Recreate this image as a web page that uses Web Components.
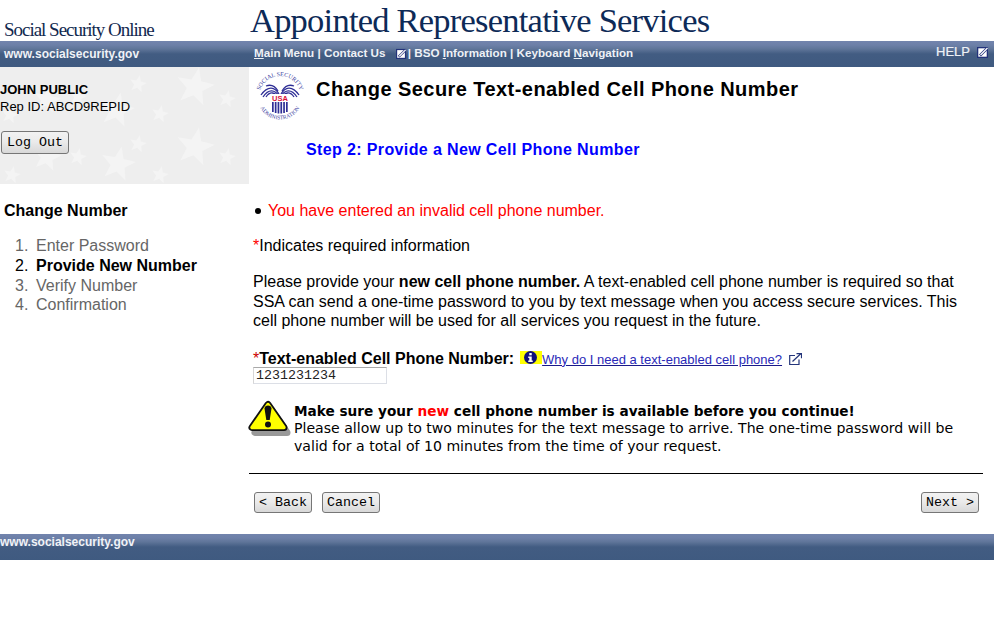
<!DOCTYPE html>
<html lang="en"><head><meta charset="utf-8"><title>Change Number</title>
<style>
html,body{margin:0;padding:0;background:#fff;font-family:"Liberation Sans",Arial,sans-serif;color:#000}
</style></head><body>
<ssa-page>
  <ssa-masthead></ssa-masthead>
  <ssa-bar>
    <span slot="left">www.socialsecurity.gov</span>
    <ssa-nav slot="right"></ssa-nav>
  </ssa-bar>
  <ssa-main>
    <ssa-sidebar slot="side"></ssa-sidebar>
    <ssa-content slot="main"></ssa-content>
  </ssa-main>
  <ssa-footer></ssa-footer>
</ssa-page>
<script>
function def(name, html){
  customElements.define(name, class extends HTMLElement{
    constructor(){super();this.attachShadow({mode:'open'}).innerHTML=html;}
  });
}
const ext=s=>`<svg width="${s}" height="${s}" viewBox="0 0 12 12" style="display:block;flex:none"><rect x="0" y="1" width="11" height="11" fill="#22327a"/><rect x="1.300" y="2.300" width="8.400" height="8.400" fill="#fff"/><path d="M3 9.500 10 2.500" stroke="#22327a" stroke-width="2.600"/><path d="M3.500 9 10.500 2" stroke="#fff" stroke-width="1.300"/></svg>`;

def('ssa-page',`<style>:host{display:block;width:994px}</style><slot></slot>`);

def('ssa-masthead',`<style>
:host{display:flex;height:41px;background:#fff;overflow:hidden;white-space:nowrap;color:#0d2a57;font-family:"Liberation Serif","Times New Roman",serif}
.a{width:246px;padding:19px 0 0 4px;box-sizing:border-box;font-size:19px;letter-spacing:-1.020px;line-height:22px;color:#12294f}
.b{font-size:34.500px;line-height:40px;letter-spacing:-.770px;padding-left:4px}
</style><div class="a">Social Security Online</div><div class="b">Appointed Representative Services</div>`);

def('ssa-bar',`<style>
:host{display:flex;height:26px;background:linear-gradient(#7284ad 0,#6d80a8 4px,#5f7599 8px,#425c82 13px,#3f5a80 100%);color:#f0f2f7;font-weight:bold;font-size:12px;white-space:nowrap}
.l{width:249px;box-sizing:border-box;padding:6px 0 0 4px;line-height:14px;letter-spacing:.02px}
.r{flex:1}
</style><div class="l"><slot name="left"></slot></div><div class="r"><slot name="right"></slot></div>`);

def('ssa-nav',`<style>
:host{display:flex;justify-content:space-between;padding:5px 5px 0 5px;line-height:14px;font-size:11.670px;font-weight:bold;color:#eef1f6}
u{text-underline-offset:1px}
.h{font-weight:normal;font-size:13px;margin-top:-2px;display:flex;gap:7px;align-items:center;height:15px;-webkit-text-stroke:.2px #eef1f6}
.m{display:flex;align-items:center;height:14px}
.i{margin:1px 1px 0 7px}
.t{white-space:pre}
</style><div class="m"><span class="t"><u>M</u>ain Menu | Contact Us </span><span class="i">${ext(11)}</span><span class="t">| BSO <u>I</u>nformation | Keyboard <u>N</u>avigation</span></div><div class="h">HELP ${ext(12)}</div>`);

def('ssa-main',`<style>
:host{display:flex;height:467px}
.s{width:249px;flex:none}.m{flex:1;min-width:0}
</style><div class="s"><slot name="side"></slot></div><div class="m"><slot name="main"></slot></div>`);

def('ssa-btn',`<style>
:host{display:inline-block}
button{display:block;height:var(--h,21px);width:var(--w,58px);padding:0;border:1px solid #767676;border-radius:3px;background:linear-gradient(#f2f2f2,#ebebeb 45%,#d8d8d8);font:13.330px/1 "Liberation Mono","Courier New",monospace;color:#000;white-space:pre}
</style><button><slot></slot></button>`);

const stars=[[195,20,20],[227,32,9],[138,17,9],[160,47,9],[117,43,18],[78,30,9],[47,33,14],[10,48,9],
 [195,80,20],[227,90,9],[138,77,9],[160,108,9],[118,97,18],[78,90,9],[47,90,15],[12,108,9]];
function star(x,y,r){let p=[];for(let i=0;i<10;i++){const a=-Math.PI/2+.2+i*Math.PI/5,q=i%2?r*.42:r;p.push((x+q*Math.cos(a)).toFixed(1)+','+(y+q*Math.sin(a)).toFixed(1));}return `<polygon points="${p.join(' ')}"/>`;}

def('ssa-sidebar',`<style>
:host{display:block}
.panel{position:relative;height:117px;background:#eeeeee;overflow:hidden;box-sizing:border-box;padding-top:15px;font-size:13px;line-height:16.500px}
.panel svg{position:absolute;left:0;top:0}
.u{position:relative}
b{display:block}
ssa-btn{display:block;margin-top:16px;margin-left:1px;--h:23px;--w:68px}
h2{margin:17px 0 0 4px;font-size:16px;line-height:20px}
ol{list-style:none;counter-reset:n;margin:15.300px 0 0 0;padding:0 0 0 15px;font-size:16px;line-height:19.700px;color:#666}
li{display:flex;counter-increment:n}
li::before{content:counter(n) ".";width:21px;flex:none;font-weight:normal}
.on{font-weight:bold;color:#000}
</style>
<div class="panel"><svg width="249" height="117" fill="#f4f4f4">${stars.map(s=>star(...s)).join('')}</svg>
<div class="u"><b>JOHN PUBLIC</b>Rep ID: ABCD9REPID<ssa-btn>Log Out</ssa-btn></div></div>
<h2>Change Number</h2>
<ol><li>Enter Password</li><li class="on">Provide New Number</li><li>Verify Number</li><li>Confirmation</li></ol>`);

def('ssa-seal',`<style>:host{display:block;width:48px;height:50px;flex:none}svg{display:block}text{font-family:"Liberation Serif",serif}</style>
<svg width="48" height="50" viewBox="0 0 48 50">
<defs><path id="t" d="M3 25A21 21 0 0 1 45 25"/><path id="bt" d="M1.500 25A22.500 22.500 0 0 0 46.500 25"/></defs>
<text font-size="6" fill="#3a3ea0"><textPath href="#t" startOffset="50%" text-anchor="middle">SOCIAL SECURITY</textPath></text>
<text font-size="5.600" fill="#3a3ea0"><textPath href="#bt" startOffset="50%" text-anchor="middle">ADMINISTRATION</textPath></text>
<g fill="none" stroke="#2f2f96" stroke-width="1.300">
<path d="M23 22C19 15 12 13 5 23"/><path d="M23 24C19 18 13 16 7 25"/><path d="M23 26C19 20 14 19 10 25"/><path d="M22 19C19 14 15 12 10 14"/>
<path d="M25 22C29 15 36 13 43 23"/><path d="M25 24C29 18 35 16 41 25"/><path d="M25 26C29 20 34 19 38 25"/><path d="M26 19C29 14 33 12 38 14"/>
</g>
<rect x="15" y="22" width="18" height="7" fill="#fff"/>
<text x="24" y="28.500" font-size="7.500" font-weight="bold" text-anchor="middle" fill="#d8123c" style="font-family:'Liberation Sans',sans-serif">USA</text>
<g fill="#2f2f96"><rect x="16" y="30" width="1.700" height="10"/><rect x="18.800" y="30" width="1.700" height="11"/><rect x="21.600" y="30" width="1.700" height="11.500"/><rect x="24.400" y="30" width="1.700" height="11.500"/><rect x="27.200" y="30" width="1.700" height="11"/><rect x="30" y="30" width="1.700" height="10"/></g>
</svg>`);

def('ssa-warn',`<style>
:host{display:flex;font-family:"DejaVu Sans",Verdana,sans-serif;font-size:14.100px;line-height:17.500px;position:relative}
svg{flex:none;display:block;margin-top:-1px;width:45px;height:41px}
.t{padding:2px 0 0 1px;white-space:nowrap}
b{color:#000;font-size:13.650px}.r{color:#f00}
</style>
<svg viewBox="0 0 45 41"><path d="M20 4.500 4 27.500H36z" transform="translate(3 5)" fill="#999" stroke="#999" stroke-width="7" stroke-linejoin="round"/><path d="M20 4.500 4 27.500H36z" fill="#ff0" stroke="#111" stroke-width="7" stroke-linejoin="round"/><path d="M20 4.500 4 27.500H36z" fill="#ff0" stroke="#ff0" stroke-width="3.400" stroke-linejoin="round"/><path d="M16.500 8.500c0-4 7-4 7 0l-1.800 11.500h-3.400z" fill="#111"/><circle cx="20" cy="24.500" r="3" fill="#111"/></svg>
<div class="t"><b>Make sure your <span class="r">new</span> cell phone number is available before you continue!</b><br>Please allow up to two minutes for the text message to arrive. The one-time password will be<br>valid for a total of 10 minutes from the time of your request.</div>`);

def('ssa-content',`<style>
:host{display:block;position:relative;font-size:16px;line-height:19.700px}
.head{display:flex;padding:5px 0 0 7px;height:67px;box-sizing:border-box}
h1{margin:6px 0 0 12px;font-size:20px;letter-spacing:.440px;line-height:23px;white-space:nowrap}
h3{margin:6px 0 0 57px;font-size:16px;letter-spacing:.375px;line-height:20px;color:#00f}
.err{margin:41px 0 0 6px;color:#f00;white-space:nowrap;display:flex;align-items:center}
.err i{flex:none;width:6px;height:6px;border-radius:50%;background:#000;margin-right:7px}
.pad{padding-left:4px}
.req{margin-top:15.500px}.s{color:#f00}
p{margin:16px 0 0;width:725px}
.lab{margin-top:17.500px;display:flex;align-items:baseline;white-space:nowrap;height:18px}
.lab .s{color:#c00;font-weight:normal}
.info{display:inline-block;width:22px;height:13px;background:#ff0;margin-left:6px;position:relative;align-self:flex-start;margin-top:2px;flex:none}
.info svg{position:absolute;left:4px;top:0}
a{font-size:13px;color:#2a2ab8;text-decoration-color:#1a1a8a}
.lab .e{margin-left:7px;align-self:flex-start;margin-top:4px}
input{display:block;margin:0;width:134px;height:17px;box-sizing:border-box;border:1px solid #dcdfe6;border-top-color:#a9a9a9;border-left-color:#d6d6d6;padding:0 2px;font:13.330px "Liberation Mono","Courier New",monospace;color:#222;background:#fff}
ssa-warn{margin:17px 0 0 -5px}
hr{margin:18px 0 0 -4px;width:734px;height:1px;background:#000;border:0;box-sizing:border-box}
.acts{display:flex;gap:10px;margin:18px 0 0 1px;width:725px}
.acts .n{margin-left:auto}
</style>
<div class="head"><ssa-seal></ssa-seal><h1>Change Secure Text-enabled Cell Phone Number</h1></div>
<h3>Step 2: Provide a New Cell Phone Number</h3>
<div class="err"><i></i><span>You have entered an invalid cell phone number.</span></div>
<div class="pad">
<div class="req"><span class="s">*</span>Indicates required information</div>
<p>Please provide your <b>new cell phone number.</b> A text-enabled cell phone number is required so that SSA can send a one-time password to you by text message when you access secure services. This cell phone number will be used for all services you request in the future.</p>
<div class="lab"><b><span class="s">*</span>Text-enabled Cell Phone Number:</b><span class="info"><svg width="13" height="13" viewBox="0 0 16 16"><circle cx="8" cy="8" r="8" fill="#10107a"/><rect x="6.500" y="2.500" width="3" height="2.800" fill="#fff"/><path d="M5.200 6.800h4.300v5h1.300v1.700H5.200v-1.700h1.300V8.500H5.200z" fill="#fff"/></svg></span><a href="#">Why do I need a text-enabled cell phone?</a><svg class="e" width="13" height="12" viewBox="0 0 13 12" fill="none" stroke="#24357a" stroke-width="1.200"><path d="M6 2.500H.7v9H10V6.500"/><path d="M3.500 8.500 11.500 1M7.500.7h5v4.500"/></svg></div>
<input value="1231231234" aria-label="Text-enabled Cell Phone Number">
<ssa-warn></ssa-warn>
<hr>
<div class="acts"><ssa-btn>&lt; Back</ssa-btn><ssa-btn>Cancel</ssa-btn><ssa-btn class="n">Next &gt;</ssa-btn></div>
</div>`);

def('ssa-footer',`<style>
:host{display:block;height:26px;background:linear-gradient(#7284ad 0,#6d80a8 4px,#5f7599 8px,#425c82 13px,#3f5a80 100%);color:#f0f2f7;font-weight:bold;font-size:12px;line-height:14px;padding-top:1px;box-sizing:border-box}
</style>www.socialsecurity.gov`);
</script>
</body></html>
